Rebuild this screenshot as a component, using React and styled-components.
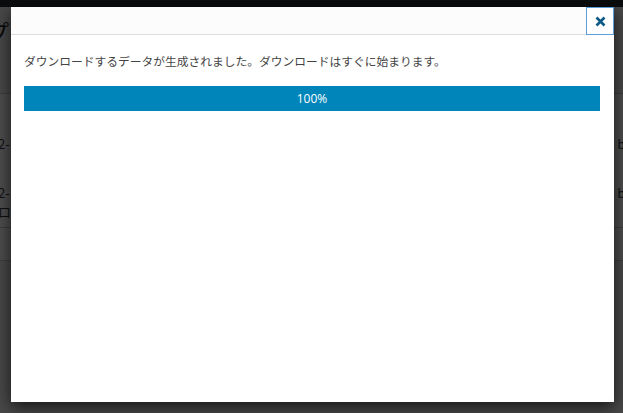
import React from "react";
import styled, { createGlobalStyle } from "styled-components";

const Global = createGlobalStyle`
  html, body { margin: 0; padding: 0; }
  body {
    width: 623px;
    height: 413px;
    overflow: hidden;
    background: #fff;
    font-family: "Noto Sans CJK JP", "Noto Sans", sans-serif;
  }
`;

const Page = styled.div`
  position: relative;
  width: 623px;
  height: 413px;
  overflow: hidden;
  background: #f1f1f1;
`;

const AdminBar = styled.div`
  height: 7px;
  background: #23282d;
`;

const PageTitle = styled.h1`
  margin: 10px 0 0 -14px;
  font-size: 23px;
  font-weight: 400;
  line-height: 29px;
  color: #23282d;
`;

const Table = styled.div`
  margin: 47px 0 0 -20px;
  width: 660px;
  background: #fff;
  border-top: 1px solid #ccc;
`;

const Row = styled.div`
  display: flex;
  justify-content: space-between;
  align-items: ${(p) => (p.top ? "flex-start" : "center")};
  box-sizing: border-box;
  height: ${(p) => p.h}px;
  padding-top: ${(p) => p.top || 0}px;
  font-size: 13px;
  line-height: 19px;
  color: #32373c;
  border-bottom: ${(p) => (p.line ? "1px solid #ccc" : "none")};
`;

const Cell = styled.span`
  display: flex;
  flex-direction: column;
  padding: 0 ${(p) => p.pad || 0}px;
`;

const Backdrop = styled.div`
  position: absolute;
  inset: 0;
  background: rgba(0, 0, 0, 0.7);
`;

const Modal = styled.div`
  position: absolute;
  left: 11px;
  top: 7px;
  width: 603px;
  height: 395px;
  background: #fff;
  box-shadow: 0 5px 15px rgba(0, 0, 0, 0.7);
  display: flex;
  flex-direction: column;
`;

const Header = styled.div`
  height: 27px;
  background: #fcfcfc;
  border-bottom: 1px solid #ddd;
  display: flex;
  justify-content: flex-end;
`;

const Close = styled.button`
  width: 28px;
  height: 28px;
  margin: 0;
  padding: 0;
  background: #fff;
  border: 1px solid #5b9dd9;
  box-sizing: border-box;
  color: #0073aa;
  display: flex;
  align-items: center;
  justify-content: center;
  cursor: pointer;
`;

const Body = styled.div`
  padding: 16px 14px 0 13px;
`;

const Message = styled.p`
  margin: 0;
  font-size: 11.75px;
  line-height: 20px;
  color: #444;
  white-space: nowrap;
`;

const Bar = styled.div`
  margin-top: 15px;
  height: 25px;
  background: #0085ba;
  color: #fff;
  font-family: "Open Sans", "Noto Sans", sans-serif;
  font-size: 12px;
  display: flex;
  align-items: center;
  justify-content: center;
`;

export default function App() {
  return (
    <Page>
      <Global />
      <AdminBar />
      <PageTitle>プ</PageTitle>
      <Table>
        <Row h={25}>
          <Cell />
        </Row>
        <Row h={49}>
          <Cell pad={18}>2-</Cell>
          <Cell pad={11}>bl</Cell>
        </Row>
        <Row h={60} top={15} line>
          <Cell pad={18}>
            <span>2-</span>
            <span>ロ</span>
          </Cell>
          <Cell pad={11}>bl</Cell>
        </Row>
        <Row h={33} line>
          <Cell />
        </Row>
      </Table>
      <Backdrop />
      <Modal>
        <Header>
          <Close aria-label="閉じる">
            <svg width="11" height="11" viewBox="0 0 11 11">
              <path d="M1.5 1.5 L9.5 9.5 M9.5 1.5 L1.5 9.5" stroke="#0e5a86" strokeWidth="2.6" strokeLinecap="butt" />
            </svg>
          </Close>
        </Header>
        <Body>
          <Message>ダウンロードするデータが生成されました。ダウンロードはすぐに始まります。</Message>
          <Bar>100%</Bar>
        </Body>
      </Modal>
    </Page>
  );
}
